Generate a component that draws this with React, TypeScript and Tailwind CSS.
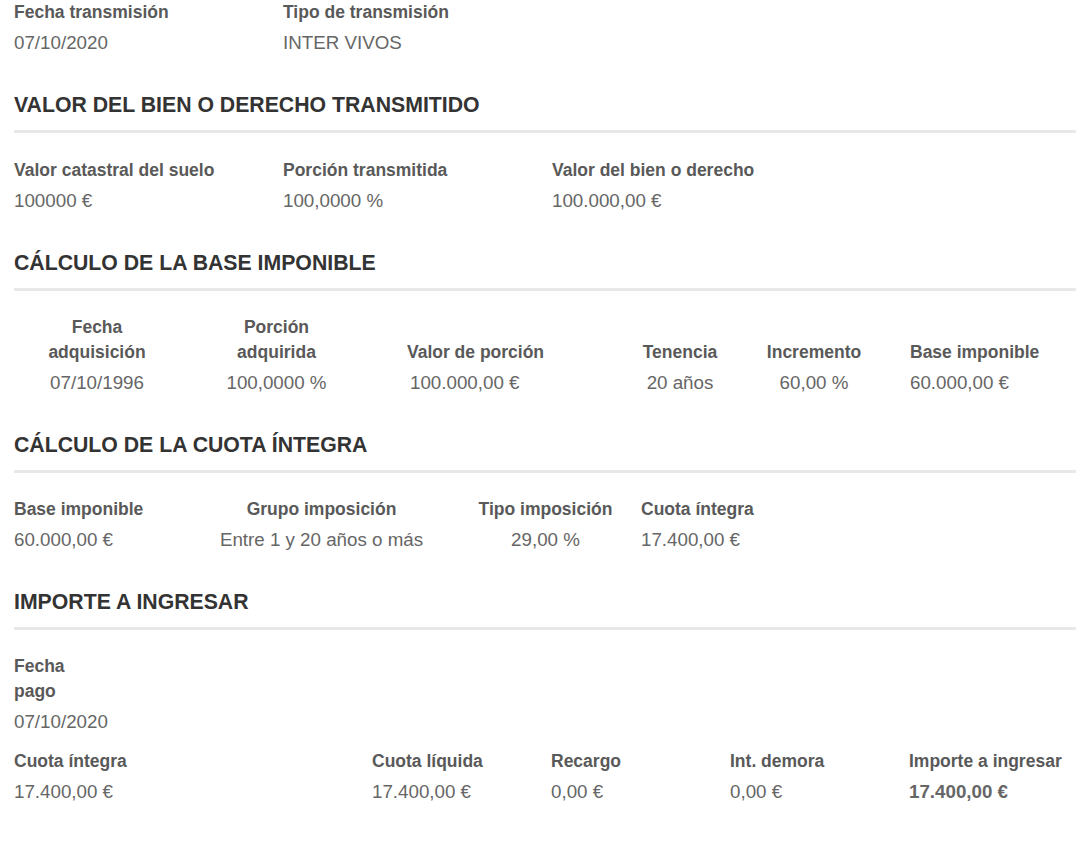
import React from "react";

const font = { fontFamily: '"Liberation Sans", Arial, sans-serif' };

function Label({ children, className = "" }: { children: React.ReactNode; className?: string }) {
  return <div className={`text-[17.5px] leading-[25px] font-bold text-[#595959] ${className}`}>{children}</div>;
}

function Value({ children, className = "" }: { children: React.ReactNode; className?: string }) {
  return <div className={`mt-[5px] text-[18.75px] leading-[25px] text-[#666666] ${className}`}>{children}</div>;
}

function Field({ label, value, className = "", bold = false }: { label: React.ReactNode; value: React.ReactNode; className?: string; bold?: boolean }) {
  return (
    <div className={className}>
      <Label>{label}</Label>
      <Value className={bold ? "font-bold" : ""}>{value}</Value>
    </div>
  );
}

function Heading({ children, first = false }: { children: React.ReactNode; first?: boolean }) {
  return (
    <div className={first ? "mt-[38px] mb-[25px]" : "mt-[38px] mb-[24px]"}>
      <h2 className="text-[21.25px] leading-[25px] font-bold text-[#333333] mb-[12px]">{children}</h2>
      <div className="h-[3px] bg-[#e8e8e8]" />
    </div>
  );
}

export default function App() {
  return (
    <div className="bg-white min-h-[844px] pl-[14px] pr-[10px]" style={font}>
      <div className="grid grid-cols-[269px_269px_1fr]">
        <Field label="Fecha transmisión" value="07/10/2020" />
        <Field label="Tipo de transmisión" value="INTER VIVOS" />
      </div>

      <Heading first>VALOR DEL BIEN O DERECHO TRANSMITIDO</Heading>
      <div className="grid grid-cols-[269px_269px_269px_1fr]">
        <Field label="Valor catastral del suelo" value="100000 €" />
        <Field label="Porción transmitida" value="100,0000 %" />
        <Field label="Valor del bien o derecho" value="100.000,00 €" />
      </div>

      <Heading>CÁLCULO DE LA BASE IMPONIBLE</Heading>
      <div className="flex items-stretch">
        <div className="w-[166px] flex flex-col items-center text-center">
          <Label className="flex-1 flex flex-col justify-end">
            <span>Fecha</span>
            <span>adquisición</span>
          </Label>
          <Value>07/10/1996</Value>
        </div>
        <div className="w-[193px] flex flex-col items-center text-center">
          <Label className="flex-1 flex flex-col justify-end">
            <span>Porción</span>
            <span>adquirida</span>
          </Label>
          <Value>100,0000 %</Value>
        </div>
        <div className="w-[205px] flex flex-col">
          <Label className="flex-1 flex flex-col justify-end text-center">Valor de porción</Label>
          <Value className="pl-[37px]">100.000,00 €</Value>
        </div>
        <div className="ml-[52px] w-[100px] flex flex-col text-center">
          <Label className="flex-1 flex flex-col justify-end">Tenencia</Label>
          <Value>20 años</Value>
        </div>
        <div className="ml-[34px] w-[100px] flex flex-col text-center">
          <Label className="flex-1 flex flex-col justify-end">Incremento</Label>
          <Value>60,00 %</Value>
        </div>
        <div className="ml-[46px] flex flex-col">
          <Label className="flex-1 flex flex-col justify-end">Base imponible</Label>
          <Value>60.000,00 €</Value>
        </div>
      </div>

      <Heading>CÁLCULO DE LA CUOTA ÍNTEGRA</Heading>
      <div className="grid grid-cols-[179px_257px_191px_1fr]">
        <Field label="Base imponible" value="60.000,00 €" />
        <Field label="Grupo imposición" value="Entre 1 y 20 años o más" className="text-center" />
        <Field label="Tipo imposición" value="29,00 %" className="text-center" />
        <Field label="Cuota íntegra" value="17.400,00 €" />
      </div>

      <Heading>IMPORTE A INGRESAR</Heading>
      <div className="w-[60px]">
        <Label>Fecha pago</Label>
        <Value className="whitespace-nowrap">07/10/2020</Value>
      </div>
      <div className="mt-[15px] grid grid-cols-[179px_179px_179px_179px_179px_1fr]">
        <Field label="Cuota íntegra" value="17.400,00 €" />
        <div />
        <Field label="Cuota líquida" value="17.400,00 €" />
        <Field label="Recargo" value="0,00 €" />
        <Field label="Int. demora" value="0,00 €" />
        <Field label="Importe a ingresar" value="17.400,00 €" bold />
      </div>
    </div>
  );
}
